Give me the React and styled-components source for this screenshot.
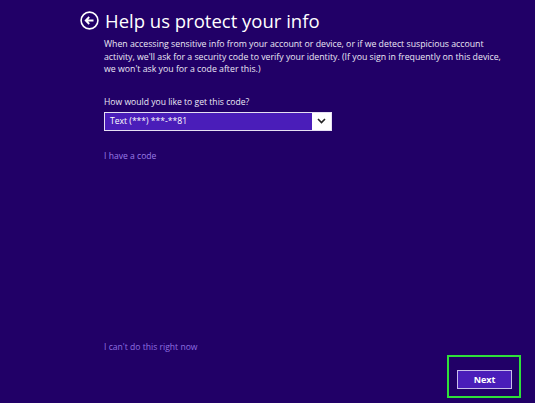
import styled, { createGlobalStyle } from 'styled-components';

const Global = createGlobalStyle`
    html, body {
        margin: 0;
        padding: 0;
        background: #210067;
    }
    body {
        font-family: 'Open Sans', 'Noto Sans', sans-serif;
    }
`

const Page = styled.div`
    width: 535px;
    height: 403px;
    box-sizing: border-box;
    background: #210067;
    color: #ffffff;
    display: flex;
    flex-direction: column;
    padding: 9px 14px 5px 80px;
`

const Header = styled.div`
    display: flex;
    align-items: center;
    gap: 6px;
    h1 {
        margin: 0;
        font-weight: 400;
        font-size: 18.5px;
        line-height: 23px;
    }
`

const BackBtn = styled.button`
    width: 19px;
    height: 19px;
    padding: 0;
    border: none;
    background: none;
    display: flex;
    align-items: center;
    justify-content: center;
    svg { display: block; }
`

const Body = styled.div`
    margin-left: 24px;
    flex: 1;
    display: flex;
    flex-direction: column;
    p {
        margin: 6px 0 0;
        font-size: 8.75px;
        line-height: 12.5px;
        color: #ece8f6;
        white-space: nowrap;
    }
`

const Label = styled.div`
    margin-top: 20px;
    font-size: 8.6px;
    color: #ece8f6;
`

const Select = styled.div`
    margin-top: 4px;
    width: 228px;
    height: 19px;
    box-sizing: border-box;
    border: 1px solid #e6e0f4;
    display: flex;
    .value {
        flex: 1;
        background: #4a1db9;
        font-size: 8.6px;
        display: flex;
        align-items: center;
        padding-left: 5px;
        color: #ffffff;
    }
    .arrow {
        width: 19px;
        background: #ffffff;
        display: flex;
        align-items: center;
        justify-content: center;
    }
`

const TextLink = styled.a`
    font-size: 8.6px;
    color: ${p => p.dim ? '#8f6fe0' : '#9a7ce6'};
    text-decoration: none;
    margin-top: ${p => p.auto ? 'auto' : '19px'};
    margin-bottom: ${p => p.auto ? '2px' : '0'};
`

const Footer = styled.div`
    display: flex;
    justify-content: flex-end;
`

const Highlight = styled.div`
    border: 2px solid #2fe03a;
    padding: 9px 7px 7px 8px;
`

const NextBtn = styled.button`
    width: 55px;
    height: 19px;
    box-sizing: border-box;
    border: 1px solid #c9bdea;
    background: #4a1db9;
    color: #ffffff;
    font-family: 'Open Sans', sans-serif;
    font-weight: 700;
    font-size: 9px;
    padding: 0;
`

const App = () => {
    return (
        <>
            <Global />
            <Page>
                <Header>
                    <BackBtn>
                        <svg width="19" height="19" viewBox="0 0 19 19">
                            <circle cx="9.5" cy="9.5" r="8.4" fill="none" stroke="#fff" strokeWidth="1.6" />
                            <path d="M13.5 9.5H5.8M9.2 6L5.7 9.5L9.2 13" fill="none" stroke="#fff" strokeWidth="1.8" />
                        </svg>
                    </BackBtn>
                    <h1>Help us protect your info</h1>
                </Header>
                <Body>
                    <p>
                        When accessing sensitive info from your account or device, or if we detect suspicious account<br />
                        activity, we'll ask for a security code to verify your identity. (If you sign in frequently on this device,<br />
                        we won't ask you for a code after this.)
                    </p>
                    <Label>How would you like to get this code?</Label>
                    <Select>
                        <div className="value">Text (***) ***-**81</div>
                        <div className="arrow">
                            <svg width="9" height="6" viewBox="0 0 9 6">
                                <path d="M1 1L4.5 4.5L8 1" fill="none" stroke="#222" strokeWidth="1.6" />
                            </svg>
                        </div>
                    </Select>
                    <TextLink href="#">I have a code</TextLink>
                    <TextLink href="#" auto dim>I can't do this right now</TextLink>
                </Body>
                <Footer>
                    <Highlight>
                        <NextBtn>Next</NextBtn>
                    </Highlight>
                </Footer>
            </Page>
        </>
    )
}

export default App;
